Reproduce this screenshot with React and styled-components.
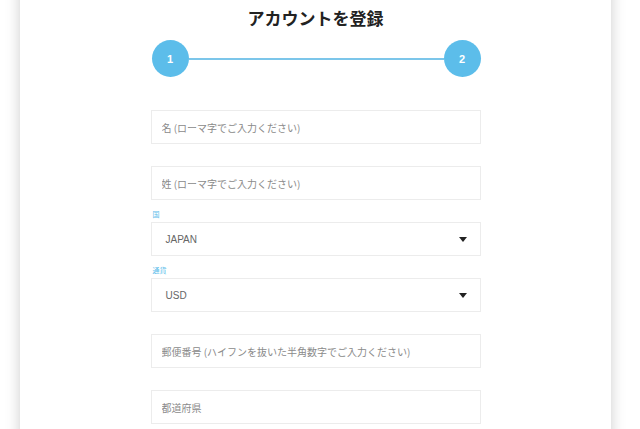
import React from 'react';
import styled, { createGlobalStyle } from 'styled-components';

const GlobalStyle = createGlobalStyle`
    html, body {
        margin: 0;
        padding: 0;
        background: #ffffff;
        font-family: "Liberation Sans", "Noto Sans CJK JP", sans-serif;
        overflow: hidden;
    }
`;

const Page = styled.div`
    padding-left: 20px;
    width: 591px;
`;

const Card = styled.div`
    background: #ffffff;
    box-shadow: 0 0 14px rgba(0, 0, 0, 0.2);
    height: 460px;
    margin-top: -20px;
    padding-top: 27px;
`;

const Column = styled.div`
    width: 330px;
    margin: 0 auto;
    display: flex;
    flex-direction: column;
`;

const Title = styled.h1`
    margin: 0;
    font-family: "Noto Sans CJK JP", sans-serif;
    font-size: 17px;
    line-height: 22px;
    font-weight: 700;
    color: #222222;
    text-align: center;
`;

const Stepper = styled.div`
    display: flex;
    align-items: center;
    margin: 11px 0 11px 1px;
`;

const Step = styled.div`
    width: 37px;
    height: 37px;
    border-radius: 50%;
    background: #5cbdea;
    color: #ffffff;
    font-size: 11px;
    font-weight: 700;
    display: flex;
    align-items: center;
    justify-content: center;
    flex-shrink: 0;
`;

const StepLine = styled.div`
    flex: 1;
    height: 2px;
    background: #7cc6ea;
`;

const Field = styled.div`
    display: flex;
    flex-direction: column;
`;

const Label = styled.div`
    height: 22px;
    display: flex;
    align-items: flex-end;
    padding: 0 0 4px 2px;
    box-sizing: border-box;
    font-family: "Noto Sans CJK JP", sans-serif;
    font-size: 7px;
    line-height: 8px;
    color: #5cbdea;
`;

const TextInput = styled.input`
    height: 34px;
    box-sizing: border-box;
    border: 1px solid #ececec;
    border-radius: 0;
    padding: 0 10px;
    font-family: "Noto Sans CJK JP", sans-serif;
    font-size: 10px;
    color: #444444;
    background: #ffffff;
    outline: none;

    &::placeholder {
        color: #8a8a8a;
    }
`;

const SelectBox = styled.div`
    height: 34px;
    box-sizing: border-box;
    border: 1px solid #ececec;
    padding: 0 13px 0 14px;
    display: flex;
    align-items: center;
    justify-content: space-between;
    font-family: "Liberation Sans", sans-serif;
    font-size: 10px;
    color: #666666;
`;

const Caret = styled.span`
    width: 0;
    height: 0;
    border-left: 4px solid transparent;
    border-right: 4px solid transparent;
    border-top: 5px solid #222222;
`;

const fields = [
    { type: 'text', placeholder: '名 (ローマ字でご入力ください)' },
    { type: 'text', placeholder: '姓 (ローマ字でご入力ください)' },
    { type: 'select', label: '国', value: 'JAPAN' },
    { type: 'select', label: '通貨', value: 'USD' },
    { type: 'text', placeholder: '郵便番号 (ハイフンを抜いた半角数字でご入力ください)' },
    { type: 'text', placeholder: '都道府県' },
];

const App = () => {
    return (
        <Page>
            <GlobalStyle />
            <Card>
                <Column>
                    <Title>アカウントを登録</Title>
                    <Stepper>
                        <Step>1</Step>
                        <StepLine />
                        <Step>2</Step>
                    </Stepper>
                    {fields.map((f, i) => (
                        <Field key={i}>
                            <Label>{f.label}</Label>
                            {f.type === 'select' ? (
                                <SelectBox>
                                    <span>{f.value}</span>
                                    <Caret />
                                </SelectBox>
                            ) : (
                                <TextInput type="text" placeholder={f.placeholder} />
                            )}
                        </Field>
                    ))}
                </Column>
            </Card>
        </Page>
    );
};

export default App;
